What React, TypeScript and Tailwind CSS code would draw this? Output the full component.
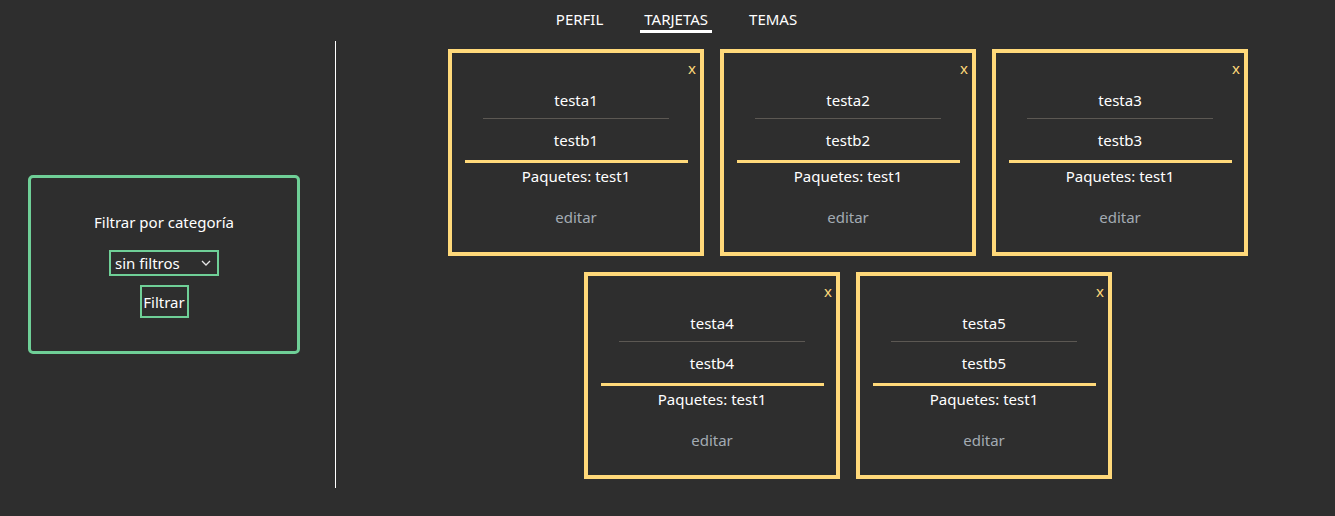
const cards = [1, 2, 3, 4, 5];

function Card({ n }: { n: number }) {
  return (
    <div className="relative w-[256px] h-[207px] border-4 border-[#ffd97a] flex flex-col items-center">
      <button className="absolute right-[4px] top-[5px] text-[#ffd97a] text-[15px] leading-[20px]">x</button>
      <p className="mt-[36px] text-[15px] leading-[22px] text-white">testa{n}</p>
      <div className="mt-[7px] w-[186px] h-px bg-[#5c5853]" />
      <p className="mt-[10px] text-[15px] leading-[22px] text-white">testb{n}</p>
      <div className="mt-[9px] w-[223px] h-[3px] bg-[#ffd97a]" />
      <p className="mt-[2px] text-[15px] leading-[22px] text-white">Paquetes: test1</p>
      <a className="mt-[19px] text-[15px] leading-[22px] text-[#a3abb3] cursor-pointer">editar</a>
    </div>
  );
}

export default function App() {
  return (
    <div
      className="min-h-screen bg-[#2e2e2e] text-white"
      style={{ fontFamily: '"Noto Sans", "Open Sans", sans-serif' }}
    >
      <nav className="h-[41px] flex justify-center items-start gap-[33px] pl-[18px] pt-[8px] text-[15px] leading-[22px]">
        <a className="px-1">PERFIL</a>
        <a className="px-1 border-b-[3px] border-white">TARJETAS</a>
        <a className="px-1">TEMAS</a>
      </nav>

      <div className="flex">
        <aside className="w-[336px] h-[447px] shrink-0 border-r border-white flex items-center pl-[28px]">
          <div className="w-[272px] h-[179px] border-[3px] border-[#6fcf97] rounded-[5px] flex flex-col items-center pt-[33px]">
            <p className="text-[15px] leading-[22px]">Filtrar por categoría</p>
            <div className="mt-[17px] w-[110px] h-[26px] border-2 border-[#6fcf97] flex items-center justify-between pl-[4px] pr-[6px]">
              <span className="text-[15px] leading-[20px]">sin filtros</span>
              <svg width="10" height="6" viewBox="0 0 10 6" fill="none" stroke="#e6e6e6" strokeWidth="1.3">
                <path d="M1 1l4 4 4-4" />
              </svg>
            </div>
            <button className="mt-[9px] w-[49px] h-[33px] border-2 border-[#6fcf97] text-[15px] leading-[20px]">
              Filtrar
            </button>
          </div>
        </aside>

        <main className="flex-1 pl-[25px] pt-[8px]">
          <div className="flex flex-wrap justify-center gap-4">
            {cards.map((n) => (
              <Card key={n} n={n} />
            ))}
          </div>
        </main>
      </div>
    </div>
  );
}
